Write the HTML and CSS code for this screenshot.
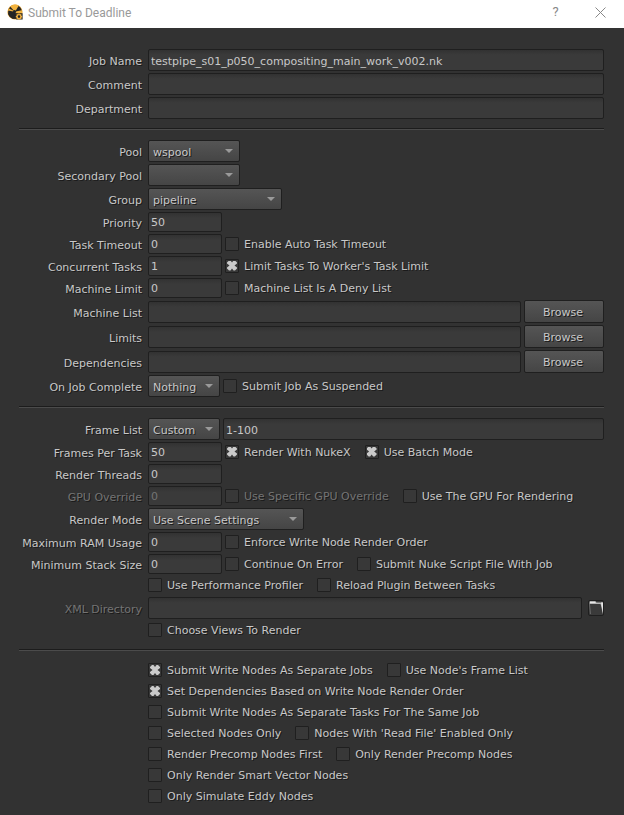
FILE: index.html
```html
<!DOCTYPE html>
<html lang="en">
<head>
<meta charset="utf-8">
<meta name="viewport" content="width=device-width, initial-scale=1">
<title>Submit To Deadline</title>
<link rel="stylesheet" href="styles.css">
</head>
<body>
<header class="titlebar">
  <svg class="logo" viewBox="0 0 16 16" aria-hidden="true">
    <circle cx="8" cy="8" r="7.6" fill="#e9a93a"/>
    <circle cx="8" cy="8" r="6.9" fill="#252525"/>
    <path d="M7.4 7.2 3.2 2.6A7.2 7.2 0 0 1 11.8 1.6L8.4 7.2Z" fill="#f2b33f"/>
    <path d="M8.6 7.6 14.9 6.2A7.2 7.2 0 0 1 13.6 12.6L8.2 8.8Z" fill="#f2b33f"/>
    <path d="M7.4 8.6 1 8.8A7.3 7.3 0 0 0 2.6 12.4L5.2 14.6 7 14.8Z" fill="#252525"/>
    <path d="M6.8 6.8 1.8 4.4 1 6.6 6.4 7.6Z" fill="#f2b33f"/>
    <circle cx="7.6" cy="7.6" r="1.5" fill="#252525"/>
    <path d="M9 9.2h6.6v6.4H9.2z" fill="#252525"/>
    <circle cx="12" cy="12.6" r="2" fill="none" stroke="#f0b040" stroke-width="1.4"/>
    <path d="M12 9.4v1.2M12 14.6v1.2M8.8 12.6H10M14 12.6h1.2M9.8 10.4l.8.8M14.2 10.4l-.8.8M9.8 14.8l.8-.8M14.2 14.8l-.8-.8" stroke="#f0b040" stroke-width="1.1"/>
  </svg>
  <h1 class="title">Submit To Deadline</h1>
  <button class="winbtn" type="button" aria-label="Help">?</button>
  <button class="winbtn" type="button" aria-label="Close">
    <svg class="close" viewBox="0 0 11 11" aria-hidden="true"><path d="M.5.5l10 10M10.5.5l-10 10" stroke="#888" fill="none"/></svg>
  </button>
</header>
<form class="panel">
  <section class="group">
    <div class="row"><label class="name" for="job">Job Name</label><input class="field" id="job" type="text" value="testpipe_s01_p050_compositing_main_work_v002.nk"></div>
    <div class="row"><label class="name" for="comment">Comment</label><input class="field" id="comment" type="text"></div>
    <div class="row"><label class="name" for="dept">Department</label><input class="field" id="dept" type="text"></div>
  </section>
  <hr class="rule">
  <section class="group">
    <div class="row"><label class="name" for="pool">Pool</label><div class="line"><span class="combo pool"><select id="pool"><option>wspool</option></select></span></div></div>
    <div class="row"><label class="name" for="pool2">Secondary Pool</label><div class="line"><span class="combo pool"><select id="pool2"><option></option></select></span></div></div>
    <div class="row"><label class="name" for="grp">Group</label><div class="line"><span class="combo grp"><select id="grp"><option>pipeline</option></select></span></div></div>
    <div class="row"><label class="name" for="prio">Priority</label><div class="line"><input class="field num" id="prio" type="text" value="50"></div></div>
    <div class="row"><label class="name" for="timeout">Task Timeout</label><div class="line"><input class="field num" id="timeout" type="text" value="0"><label class="check"><input type="checkbox">Enable Auto Task Timeout</label></div></div>
    <div class="row"><label class="name" for="conc">Concurrent Tasks</label><div class="line"><input class="field num" id="conc" type="text" value="1"><label class="check"><input type="checkbox" checked>Limit Tasks To Worker's Task Limit</label></div></div>
    <div class="row"><label class="name" for="mlimit">Machine Limit</label><div class="line"><input class="field num" id="mlimit" type="text" value="0"><label class="check"><input type="checkbox">Machine List Is A Deny List</label></div></div>
    <div class="row"><label class="name" for="mlist">Machine List</label><div class="line"><input class="field" id="mlist" type="text"><button class="browse" type="button">Browse</button></div></div>
    <div class="row"><label class="name" for="limits">Limits</label><div class="line"><input class="field" id="limits" type="text"><button class="browse" type="button">Browse</button></div></div>
    <div class="row"><label class="name" for="deps">Dependencies</label><div class="line"><input class="field" id="deps" type="text"><button class="browse" type="button">Browse</button></div></div>
    <div class="row"><label class="name" for="done">On Job Complete</label><div class="line"><span class="combo short"><select id="done"><option>Nothing</option></select></span><label class="check"><input type="checkbox">Submit Job As Suspended</label></div></div>
  </section>
  <hr class="rule">
  <section class="group">
    <div class="row"><label class="name" for="frames">Frame List</label><div class="line"><span class="combo short"><select id="frames"><option>Custom</option></select></span><input class="field" type="text" value="1-100" aria-label="Frames"></div></div>
    <div class="row"><label class="name" for="fpt">Frames Per Task</label><div class="line"><input class="field num" id="fpt" type="text" value="50"><label class="check"><input type="checkbox" checked>Render With NukeX</label><label class="check"><input type="checkbox" checked>Use Batch Mode</label></div></div>
    <div class="row"><label class="name" for="threads">Render Threads</label><div class="line"><input class="field num" id="threads" type="text" value="0"></div></div>
    <div class="row"><label class="name off" for="gpu">GPU Override</label><div class="line"><input class="field num" id="gpu" type="text" value="0" disabled><label class="check off"><input type="checkbox" disabled>Use Specific GPU Override</label><label class="check"><input type="checkbox">Use The GPU For Rendering</label></div></div>
    <div class="row"><label class="name" for="mode">Render Mode</label><div class="line"><span class="combo mode"><select id="mode"><option>Use Scene Settings</option></select></span></div></div>
    <div class="row"><label class="name" for="ram">Maximum RAM Usage</label><div class="line"><input class="field num" id="ram" type="text" value="0"><label class="check"><input type="checkbox">Enforce Write Node Render Order</label></div></div>
    <div class="row"><label class="name" for="stack">Minimum Stack Size</label><div class="line"><input class="field num" id="stack" type="text" value="0"><label class="check"><input type="checkbox">Continue On Error</label><label class="check"><input type="checkbox">Submit Nuke Script File With Job</label></div></div>
    <div class="row"><div class="line checks"><label class="check"><input type="checkbox">Use Performance Profiler</label><label class="check"><input type="checkbox">Reload Plugin Between Tasks</label></div></div>
    <div class="row"><label class="name off" for="xml">XML Directory</label><div class="line path"><input class="field" id="xml" type="text" disabled><button class="folder" type="button" aria-label="Choose directory" disabled>
      <svg viewBox="0 0 14 14" aria-hidden="true"><path d="M.5.5h6l1 1H14V13.5L12 4.500 11.500 3H.5z" fill="#b5b5b5"/><path d="M1 .5h5.500V2H1zM12 1.500h2V12z" fill="#e8e8e8"/><path d="M.5 3 1.500 13" stroke="#686868" fill="none"/></svg>
    </button></div></div>
    <div class="row"><div class="line checks"><label class="check"><input type="checkbox">Choose Views To Render</label></div></div>
  </section>
  <hr class="rule">
  <section class="group">
    <div class="row"><div class="line checks"><label class="check"><input type="checkbox" checked>Submit Write Nodes As Separate Jobs</label><label class="check"><input type="checkbox">Use Node's Frame List</label></div></div>
    <div class="row"><div class="line checks"><label class="check"><input type="checkbox" checked>Set Dependencies Based on Write Node Render Order</label></div></div>
    <div class="row"><div class="line checks"><label class="check"><input type="checkbox">Submit Write Nodes As Separate Tasks For The Same Job</label></div></div>
    <div class="row"><div class="line checks"><label class="check"><input type="checkbox">Selected Nodes Only</label><label class="check"><input type="checkbox">Nodes With 'Read File' Enabled Only</label></div></div>
    <div class="row"><div class="line checks"><label class="check"><input type="checkbox">Render Precomp Nodes First</label><label class="check"><input type="checkbox">Only Render Precomp Nodes</label></div></div>
    <div class="row"><div class="line checks"><label class="check"><input type="checkbox">Only Render Smart Vector Nodes</label></div></div>
    <div class="row"><div class="line checks"><label class="check"><input type="checkbox">Only Simulate Eddy Nodes</label></div></div>
  </section>
</form>
</body>
</html>
```
FILE: styles.css
```css
* { box-sizing: border-box; }

body {
  margin: 0;
  min-height: 100vh;
  background: #323232;
  color: #c8c8c8;
  font: 11px/14px Verdana, "DejaVu Sans", sans-serif;
}

input, select, button {
  margin: 0;
  font: inherit;
  color: inherit;
  text-shadow: inherit;
}

/* Window title bar */
.titlebar {
  display: flex;
  align-items: center;
  height: 28px;
  padding: 0 1px 4px 7px;
  background: #fff;
  color: #999;
  font-family: "Segoe UI", Roboto, sans-serif;
}
.logo { width: 16px; height: 16px; margin-right: 5px; }
.title { flex: 1; margin: 0; padding-top: 2px; font-size: 12px; font-weight: 400; line-height: 16px; }
.winbtn {
  display: grid;
  place-items: center;
  width: 45px;
  height: 24px;
  padding: 0;
  border: 0;
  background: none;
  color: #888;
  font-size: 13px;
}
.close { width: 11px; height: 11px; }

/* Form */
.panel {
  padding: 21px 20px 9px 19px;
  text-shadow: 1px 1px 0 #1a1a1a;
}
.group { display: grid; gap: 2px; }
.row {
  display: grid;
  grid-template-columns: 123px minmax(0, 1fr);
  column-gap: 6px;
  align-items: center;
}
.name { text-align: right; white-space: nowrap; padding-top: 4px; }
.off { color: #747474; }
.line { display: flex; align-items: center; gap: 3px; min-width: 0; }
.checks { grid-column: 2; height: 19px; }
.path { gap: 6px; }

.rule {
  height: 2px;
  margin: 9px 0 10px;
  border: 0;
  border-top: 1px solid #1c1c1c;
  background: #4b4b4b;
}

.field {
  flex: 1;
  width: 100%;
  min-width: 0;
  height: 22px;
  padding: 2px 2px 0;
  border: 1px solid #1f1f1f;
  border-radius: 2px;
  background: linear-gradient(#323232, #3a3a3a 5px);
  text-shadow: none;
}
.field:disabled { color: #747474; }
.num { flex: none; width: 74px; height: 20px; padding-top: 1px; }

.combo { display: grid; align-items: center; flex: none; }
.combo select, .combo::after { grid-area: 1 / 1; }
.combo select {
  appearance: none;
  width: 100%;
  height: 22px;
  padding: 3px 4px 0;
  border: 1px solid #1f1f1f;
  border-radius: 2px;
  background: linear-gradient(#555, #454545);
}
.combo::after {
  content: "";
  justify-self: end;
  width: 8px;
  height: 4px;
  margin-right: 7px;
  background: #9a9a9a;
  clip-path: polygon(0 0, 100% 0, 50% 100%);
  pointer-events: none;
}
.pool { width: 92px; }
.grp { width: 134px; }
.short { width: 72px; }
.mode { width: 156px; }

.browse {
  flex: none;
  width: 80px;
  height: 23px;
  padding: 2px 2px 0 0;
  border: 1px solid #1f1f1f;
  border-radius: 2px;
  background: linear-gradient(#555, #454545);
}
.folder {
  flex: none;
  width: 16px;
  height: 16px;
  padding: 0;
  border: 1px solid #1f1f1f;
  border-radius: 2px;
  background: #3a3a3a;
}
.folder svg { display: block; width: 100%; height: 100%; }

.check {
  display: flex;
  align-items: center;
  gap: 5px;
  height: 18px;
  padding-top: 2px;
  margin-bottom: 1px;
  white-space: nowrap;
}
.check + .check { margin-left: 11px; }
.check input {
  appearance: none;
  display: grid;
  place-items: center;
  width: 14px;
  height: 14px;
  margin-bottom: 2px;
  border: 1px solid #1f1f1f;
  border-radius: 1px;
  background: #383838;
}
.check input:checked::before {
  content: "";
  width: 10px;
  height: 10px;
  background: #cacaca;
  clip-path: polygon(0 20%, 20% 0, 35% 0, 50% 20%, 65% 0, 80% 0, 100% 20%, 100% 30%, 75% 50%, 100% 70%, 100% 80%, 80% 100%, 65% 100%, 50% 80%, 35% 100%, 20% 100%, 0 80%, 0 70%, 25% 50%, 0 30%);
}
```
